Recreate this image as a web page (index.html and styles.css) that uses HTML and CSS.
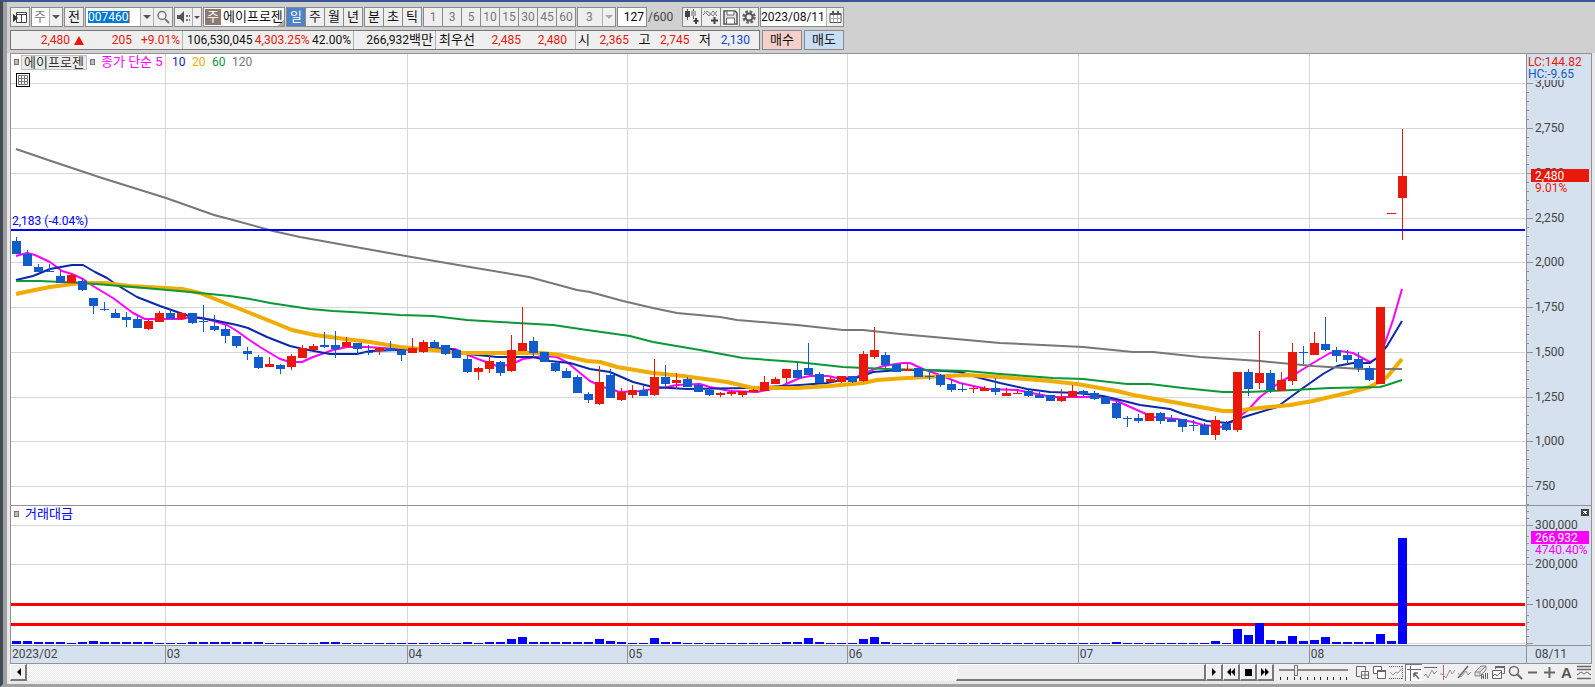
FILE: index.html
```html
<!DOCTYPE html>
<html lang="ko">
<head>
<meta charset="utf-8">
<title>에이프로젠 007460</title>
<link rel="stylesheet" href="styles.css">
</head>
<body>
<div class="window">
<header class="head">
  <div class="toolbar">
    <button class="btn" aria-label="패널"><svg width="15" height="13"><path d="M3.500 1.500h10v10h-10z M3 3.500h11 M8.500 3v9" fill="#fff" stroke="#444"/><path d="M0 3l5 4-5 4z" fill="#333"/></svg></button>
    <label class="combo"><select class="pick dim ko" aria-label="시장"><option>주</option></select><span class="arrow"></span></label>
    <button class="btn ko">전</button>
    <div class="combo code"><input class="field code-field" value="007460" aria-label="종목코드"><button class="arrow" aria-label="종목 목록"></button><button class="part" aria-label="검색"><svg width="14" height="14"><circle cx="6" cy="5.500" r="4" fill="#f4f4f4" stroke="#777" stroke-width="1.500"/><path d="M9 9l4 4" stroke="#777" stroke-width="2"/></svg></button></div>
    <div class="combo sound"><button class="part" aria-label="소리"><svg width="14" height="12"><path d="M0 4h3l4-4v12l-4-4h-3z" fill="#555"/><path d="M9 4h2v2h-2zM12 4h1v2h-1zM9 8h2v2h-2zM12 8h1v2h-1z" fill="#777"/></svg></button><button class="arrow small" aria-label="소리 설정"></button></div>
    <div class="stock ko"><span class="badge">주</span><span>에이프로젠</span></div>
    <div class="group ko"><button class="on">일</button><button>주</button><button>월</button><button>년</button></div>
    <div class="group ko"><button>분</button><button>초</button><button>틱</button></div>
    <div class="group dim"><button>1</button><button>3</button><button>5</button><button>10</button><button>15</button><button>30</button><button>45</button><button>60</button></div>
    <label class="combo"><select class="pick count dim" aria-label="간격"><option>3</option></select><span class="arrow faint"></span></label>
    <label class="bars"><input class="field bars-field" value="127" aria-label="봉 개수"><span>/600</span></label>
    <div class="group tools">
      <button aria-label="봉 종류"><svg width="16" height="16"><path d="M3.500 0v11M9.500 0v10" stroke="#555"/><path d="M1 2h5v6h-5z" fill="#444"/><path d="M7 2h5v5h-5z" fill="#aaa"/><path d="M12 9v6M9.500 12h5" stroke="#444" stroke-width="2"/></svg></button>
      <button aria-label="지표 추가"><svg width="16" height="16"><path d="M0 6l4-4 6 5 4-5M1 2l5 5 4-5 4 5" fill="none" stroke="#777"/><path d="M11.500 8v7M8 11.500h7" stroke="#444" stroke-width="2"/></svg></button>
      <button aria-label="저장"><svg width="15" height="15"><path d="M1 1h11l2 2v11h-13z" fill="#e4e4e4" stroke="#555" stroke-width="1.500"/><path d="M4 1h7v4h-7zM3.500 8h8v6h-8z" fill="#fff" stroke="#666"/></svg></button>
      <button aria-label="설정"><svg width="14" height="14"><circle cx="7" cy="7" r="5.500" fill="none" stroke="#666" stroke-width="2.500" stroke-dasharray="2.600 1.720"/><circle cx="7" cy="7" r="3.500" fill="none" stroke="#555" stroke-width="2"/></svg></button>
    </div>
    <div class="combo date"><input class="field date-field" value="2023/08/11" aria-label="날짜"><button class="part" aria-label="달력"><svg width="13" height="12"><path d="M1 2.500h11v9h-11z" fill="#fff" stroke="#555"/><path d="M1 3h11M4 0v3M9 0v3" stroke="#555" stroke-width="2"/><path d="M1 7.500h11M4.500 4v7M8.500 4v7" stroke="#aaa"/></svg></button></div>
  </div>
  <div class="quote-row">
    <div class="quote">
      <div class="cell now"><span class="red">2,480</span><svg class="up" width="10" height="9"><path d="M5 0l5 9h-10z" fill="#e8190a"/></svg><span class="red diff">205</span><span class="red rate">+9.01%</span></div>
      <div class="cell volume"><span>106,530,045</span><span class="red">4,303.25%</span><span>42.00%</span></div>
      <div class="cell value"><span>266,932</span><span class="ko">백만</span></div>
      <div class="cell best"><span class="ko">최우선</span><span class="red">2,485</span><span class="red">2,480</span></div>
      <div class="cell ohl"><span class="ko">시</span><span class="red">2,365</span><span class="ko">고</span><span class="red">2,745</span><span class="ko">저</span><span class="blue">2,130</span></div>
    </div>
    <button class="order buy ko">매수</button>
    <button class="order sell ko">매도</button>
  </div>
</header>
<main class="frame">
  <div class="chart">
    <section class="pane">
      <div class="plot">
        <svg id="price" class="draw" viewBox="11 54 1515 451" height="451" preserveAspectRatio="none"></svg>
        <div class="legend">
          <i class="mark"></i><span class="name ko">에이프로젠</span><i class="mark"></i>
          <span class="ma5 ko">종가 단순 5</span><span class="ma10">10</span><span class="ma20">20</span><span class="ma60">60</span><span class="ma120">120</span>
        </div>
        <button class="sheet" aria-label="표"><svg width="10" height="10"><path d="M.5.5h9v9h-9zM0 3.500h10M0 6.500h10M3.500 0v10M6.500 0v10" fill="none" stroke="#777"/></svg></button>
        <span class="base">2,183 (-4.04%)</span>
      </div>
      <svg id="priceAxis" class="axis" viewBox="1526 54 65 451" width="65" height="451"></svg>
    </section>
    <section class="pane">
      <div class="plot">
        <svg id="volume" class="draw" viewBox="11 506 1515 139" height="139" preserveAspectRatio="none"></svg>
        <div class="legend low"><i class="mark"></i><span class="turnover ko">거래대금</span></div>
      </div>
      <svg id="volumeAxis" class="axis" viewBox="1526 506 65 139" width="65" height="139"></svg>
    </section>
    <div class="months">
      <div class="spans"><span class="m2">2023/02</span><span class="m3">03</span><span class="m4">04</span><span class="m5">05</span><span class="m6">06</span><span class="m7">07</span><span class="m8">08</span></div>
      <span class="last">08/11</span>
    </div>
  </div>
  <div class="bottom">
    <button class="key" aria-label="왼쪽"><svg width="5" height="8"><path d="M5 0v8l-4-4z"/></svg></button>
    <div class="track"><div class="thumb"></div></div>
    <div class="keys">
      <button class="key" aria-label="오른쪽"><svg width="5" height="8"><path d="M0 0v8l4-4z"/></svg></button>
      <button class="key" aria-label="뒤로"><svg width="10" height="8"><path d="M5 0v8l-4-4zM9 0v8l-4-4z"/></svg></button>
      <button class="key" aria-label="정지"><svg width="7" height="7"><path d="M0 0h7v7h-7z"/></svg></button>
      <button class="key" aria-label="앞으로"><svg width="10" height="8"><path d="M1 0v8l4-4zM5 0v8l4-4z"/></svg></button>
    </div>
    <label class="slide"><input type="range" min="0" max="100" value="23" aria-label="확대"><svg width="68" height="3"><path d="M1.500 0v3M8.500 0v3M15.500 0v3M21.500 0v3M28.500 0v3M35.500 0v3M41.500 0v3M48.500 0v3M54.500 0v3M61.500 0v3M67.500 0v3" stroke="#222"/></svg></label>
    <div class="icons">
      <button aria-label="창 추가"><svg viewBox="0 0 15 15"><path d="M5.500 11.500h-4v-10h9v4"/><path d="M6.500 6.500h7v7h-7zM10 7v6M7 10h6" fill="#fff"/></svg></button>
      <button aria-label="창 복사"><svg viewBox="0 0 15 15"><path d="M1.500 1.500h8v7h-8z" fill="#fff"/><path d="M5.500 5.500h8v8h-8z" fill="#fff"/><path d="M5 6h9" stroke-width="2"/></svg></button>
      <button aria-label="영역"><svg viewBox="0 0 15 15"><path d="M0 1.500h14M0 13.500h14M13.500 1v13" stroke-dasharray="1 1"/><path d="M1 7l3 3 3-3 2 1 4-5" stroke="#999"/></svg></button>
      <button class="pressed" aria-label="십자선"><svg viewBox="0 0 15 15"><path d="M0 3.500h14M3.500 0v15"/><path d="M7 7l5 6M7 7h4M7 7v4" stroke-width="1.500"/></svg></button>
      <button aria-label="수평선"><svg viewBox="0 0 15 15"><path d="M1 2.500h13"/><path d="M1 11l2-2 2 4 4-8 2 4 3-3" stroke="#999"/></svg></button>
      <button aria-label="수직선"><svg viewBox="0 0 15 15"><path d="M3.500 0v15" stroke="#a56a7c"/><path d="M0 9h2l4 4 4-8 2 4 3-4" stroke="#999"/></svg></button>
      <button aria-label="추세선"><svg viewBox="0 0 15 15"><path d="M1 13l10-12" stroke-width="1.500"/><path d="M1 8l3 4 5-6 2 4 3-3" stroke="#999"/></svg></button>
      <button aria-label="전체 지우기"><svg viewBox="0 0 15 15"><path d="M1 7l6-6h5l-6 6zM1 7v4h5v-4M6 11l6-6v-4" fill="#ddd" stroke="#888"/><path d="M7.500 14v-4l1-1 1 1v4M7.500 12h2M11.500 8v6M13.500 8v6"/></svg></button>
      <button aria-label="차트 겹치기"><svg viewBox="0 0 15 15"><path d="M4.500 4v-2.500h9v7h-2"/><path d="M1.500 5.500h9v8h-9zM2 11l2-2 2 2 4-4" fill="#fff"/><path d="M4 2h10" stroke-width="2"/></svg></button>
      <button aria-label="돋보기"><svg viewBox="0 0 15 15"><circle cx="6" cy="6" r="4.500" stroke-width="1.500"/><path d="M9 9l5 5" stroke-width="2"/></svg></button>
      <button aria-label="축소"><svg viewBox="0 0 15 15"><path d="M3 7.500h9" stroke-width="2"/></svg></button>
      <button aria-label="확대"><svg viewBox="0 0 15 15"><path d="M2 7.500h11M7.500 2v11" stroke-width="2"/></svg></button>
      <button class="letter" aria-label="글자">A</button>
      <button aria-label="목록"><svg viewBox="0 0 15 15"><path d="M1 1.500h14M1 4.500h14M1 13.500h14" stroke-width="1.500"/><path d="M1 10l4-3 3 2 3-2 4 3"/></svg></button>
    </div>
  </div>
</main>
</div>
<script src="chart.js"></script>
</body>
</html>
```

FILE: chart.js
```js
// Each candle: direction, high, body top, body bottom, low
const candles = `b 237 241 254 254|b 250 254 266 266|b 264 267 272 272|b 264 271 272 272|b 271 276 283 283|r 273 275 283 283|b 278 281 290 291|b 298 298 306 314|b 302 309 310 311|b 309 313 318 318|b 312 317 320 327|b 316 319 328 328|r 320 321 329 330|r 311 313 322 322|b 310 313 319 319|r 312 313 319 320|b 313 313 323 324|b 305 321 322 332|b 315 326 330 331|b 325 329 336 343|b 336 336 346 348|b 347 351 354 360|b 355 357 368 369|r 357 364 367 367|b 364 365 369 374|r 354 356 367 370|r 345 348 358 358|r 344 346 350 350|b 332 345 347 348|b 331 345 349 358|r 337 342 347 347|b 343 343 349 354|b 345 352 353 355|r 347 348 351 355|b 341 348 351 351|b 350 350 355 361|r 338 348 353 353|r 340 342 352 353|b 340 342 347 348|b 345 345 354 355|b 350 350 358 358|b 355 359 372 373|r 367 368 372 380|r 356 361 369 373|b 361 362 373 376|r 335 350 371 372|r 307 343 351 351|b 337 341 353 357|b 352 352 362 362|b 362 363 371 372|b 368 371 378 378|b 375 377 393 393|b 392 394 400 403|r 366 382 404 405|b 369 375 398 398|r 388 392 400 401|r 385 390 395 398|b 386 390 396 396|r 359 377 395 396|b 365 377 384 389|r 373 380 383 389|b 377 379 387 387|b 384 385 392 392|b 388 390 395 396|r 392 393 395 397|r 390 392 394 396|r 391 391 395 397|r 389 390 392 393|r 376 382 391 391|r 377 379 384 384|r 369 369 378 383|b 363 370 378 378|b 343 368 375 375|b 372 374 383 383|r 377 379 382 382|r 376 376 382 383|b 376 376 382 383|r 351 354 381 382|r 327 350 357 359|b 352 355 365 368|b 364 364 372 372|r 364 369 371 371|b 368 368 377 377|b 372 376 377 380|b 374 375 385 387|b 380 384 390 392|b 383 389 390 392|r 386 388 389 393|r 386 388 391 391|b 378 388 392 395|r 388 393 396 396|r 389 393 394 394|b 390 391 396 397|b 392 395 398 398|b 395 395 401 401|r 389 397 401 402|r 385 391 397 397|b 390 391 394 396|b 391 393 399 400|b 397 397 404 404|b 400 403 418 419|b 416 418 419 427|b 414 418 421 423|r 413 413 421 421|b 412 413 421 424|b 415 419 422 422|b 419 419 427 432|b 420 425 426 431|b 423 425 435 435|r 416 420 435 440|b 421 424 430 431|r 372 372 430 432|b 369 372 389 396|r 331 373 383 389|b 370 373 390 393|r 372 380 391 391|r 343 352 381 385|b 346 352 353 364|r 332 343 355 355|b 317 344 350 351|b 347 350 356 362|b 350 355 360 364|b 352 359 368 372|b 366 368 380 381|r 307 307 384 384|r 213 213 214 214|r 129 176 198 240`
  .split('|').map(row => row.split(' '));

const averages = [
  ['#ff00ff', 2, '16,256 27,253 35,255 50,262 62,271 72,274 83,279 93,286 113,298 133,313 145,319 182,319 192,317 203,318 227,325 237,331 248,339 260,347 280,359 290,362 302,362 313,357 333,350 347,347 367,347 397,349 428,348 455,349 468,355 478,359 497,366 510,365 523,359 543,356 557,357 568,363 580,373 590,381 603,387 620,392 640,391 667,387 677,385 700,384 710,387 730,391 757,392 777,388 800,378 810,376 828,376 837,378 857,377 867,372 883,366 903,363 910,363 923,369 937,374 960,383 987,389 1017,390 1037,394 1053,397 1073,397 1100,397 1117,401 1137,410 1153,417 1177,419 1193,422 1203,425 1223,427 1235,420 1248,410 1260,397 1280,382 1297,373 1313,363 1330,353 1340,351 1353,353 1370,362 1380,356 1385,343 1393,320 1402,289'],
  ['#0a28aa', 2, '16,280 33,276 50,269 72,265 83,265 95,272 107,278 117,285 137,297 160,306 180,313 192,317 213,320 237,325 248,328 267,337 290,346 303,349 330,354 357,354 370,351 400,350 430,348 450,349 468,354 497,357 533,357 550,361 570,363 590,369 610,372 633,382 653,387 687,389 747,388 800,385 827,383 847,379 860,377 873,372 900,370 927,370 960,372 980,378 1000,383 1027,389 1050,392 1077,393 1103,396 1120,400 1140,405 1170,409 1183,414 1207,421 1227,423 1247,416 1277,407 1303,388 1323,374 1337,366 1353,363 1370,363 1377,358 1387,346 1402,321'],
  ['#f0ac00', 4, '16,294 30,291 50,287 80,283 105,283 130,286 182,289 200,293 220,301 250,313 270,321 292,330 315,335 345,339 370,342 400,347 433,350 460,353 543,353 560,355 587,361 600,362 617,367 653,373 683,376 727,382 753,388 797,388 830,386 863,383 877,380 907,378 927,377 967,375 1000,377 1050,381 1077,384 1117,391 1133,395 1167,401 1200,407 1223,411 1237,411 1250,409 1290,405 1313,401 1347,393 1370,387 1387,377 1402,359'],
  ['#0a9838', 2, '16,281 40,281 83,283 133,287 190,292 230,296 250,299 270,303 310,309 333,311 370,313 400,315 433,316 467,320 500,322 553,325 587,330 630,336 653,342 700,350 743,358 797,362 843,367 887,369 967,371 1000,374 1053,378 1083,379 1127,384 1150,384 1183,388 1223,392 1247,392 1293,390 1330,388 1380,387 1387,385 1402,380'],
  ['#777777', 2, '16,149 51,161 102,178 166,198 214,215 233,220 273,231 300,237 400,255 458,265 529,277 577,290 590,292 623,301 653,308 677,313 720,317 737,320 797,325 843,330 863,330 900,334 967,340 1000,343 1083,347 1133,352 1153,352 1200,357 1260,361 1313,366 1360,369 1402,369']
];

// Turnover bar heights for the taller sessions; every other session is 1 tall
const heights = {0:3,1:3,2:2,3:2,4:2,6:2,7:3,8:2,9:2,10:2,11:2,12:2,16:2,17:2,18:2,19:2,20:2,21:2,22:2,28:2,29:2,41:2,43:2,44:2,45:5,46:7,47:2,48:2,49:2,50:2,51:2,52:2,53:5,54:3,55:2,58:6,59:2,60:2,70:2,71:2,72:6,73:2,77:5,78:7,79:2,100:2,109:3,111:15,112:9,113:21,114:4,115:3,116:8,117:3,118:4,119:7,120:2,121:2,122:2,123:2,124:10,125:3,126:106};

const months = [165, 407, 627, 847, 1078, 1309];
const rect = (x, y, w, h, fill) => `<rect x="${x}" y="${y}" width="${w}" height="${h}" fill="${fill}"/>`;
const text = (x, y, s, fill = '#444') => `<text x="${x}" y="${y}" fill="${fill}">${s}</text>`;
const grid = '#d6d6d6';
const levels = [[83, '3,000'], [128, '2,750'], [173, '2,500'], [218, '2,250'], [262, '2,000'], [307, '1,750'], [352, '1,500'], [397, '1,250'], [441, '1,000'], [486, '750']];

let price = months.map(x => rect(x, 54, 1, 451, grid)).join('') + levels.map(([y]) => rect(11, y, 1514, 1, grid)).join('');
const line = ([color, width, points]) => `<polyline points="${points}" fill="none" stroke="${color}" stroke-width="${width}" stroke-linejoin="round"/>`;
price += [0, 1, 2, 3, 4].map(i => line(averages[i])).join('');
candles.forEach(([dir, high, top, bottom, low], i) => {
  const x = 12 + 11 * i, color = dir === 'r' ? '#e8190a' : '#125bcb';
  price += rect(x + 4, high, 1, low - high, color) + rect(x, top, 9, bottom - top, color);
});
price += rect(11, 229, 1514, 2, '#0000ff');
document.getElementById('price').innerHTML = price;

let axis = rect(1526, 54, 1, 451, '#929292');
levels.forEach(([y, label], i) => {
  axis += rect(1527, y, 6, 1, '#929292') + text(1535, y + 4, label);
  for (let k = 1; k < 5 && y + 9 * k < 505; k++) axis += rect(1527, y + 9 * k, 2, 1, '#929292');
});
axis += rect(1527, 54, 64, 26, '#d6e1ef') + text(1528, 66, 'LC:144.82', '#e8190a') + text(1528, 78, 'HC:-9.65', '#125bcb');
axis += rect(1531, 169, 58, 13, '#e8190a') + text(1535, 180, '2,480', '#fff') + text(1535, 192, '9.01%', '#e8190a');
document.getElementById('priceAxis').innerHTML = axis;

let volume = months.map(x => rect(x, 506, 1, 139, grid)).join('') + [525, 564, 643].map(y => rect(11, y, 1514, 1, grid)).join('');
volume += rect(11, 603, 1514, 3, '#ff0000') + rect(11, 623, 1514, 3, '#ff0000');
candles.forEach((_, i) => {
  const h = heights[i] || 1;
  volume += rect(12 + 11 * i, 644 - h, 9, h, '#0000ff');
});
document.getElementById('volume').innerHTML = volume;

let side = rect(1526, 506, 1, 139, '#929292');
[511, 518, 536, 543, 550, 557, 576, 583, 590, 597, 615, 622, 629, 636].forEach(y => side += rect(1527, y, 2, 1, '#929292'));
[525, 564, 604, 643].forEach(y => side += rect(1527, y, 6, 1, '#929292'));
side += text(1535, 529, '300,000') + text(1535, 568, '200,000') + text(1535, 608, '100,000');
side += rect(1531, 531, 58, 13, '#ff00ff') + text(1535, 542, '266,932', '#fff') + text(1535, 554, '4740.40%', '#ff00ff');
side += rect(1581, 509, 8, 7, '#444') + '<path d="M1583 511l4 3M1587 511l-4 3" stroke="#fff"/>';
document.getElementById('volumeAxis').innerHTML = side;
```

FILE: styles.css
```css
* { box-sizing: border-box; }
body { margin: 0; background: #a0a0a0; color: #111; font: 12px/16px Roboto, "Noto Sans CJK KR", sans-serif; }
button, input, select { font: inherit; color: inherit; margin: 0; padding: 0; border: 0; border-radius: 0; background: none; }
svg { display: block; flex: none; }
.ko { font-size: 13px; }
.window { min-height: 100vh; border-top: 2px solid #3a5593; border-left: 3px solid #454b54; border-bottom: 3px solid #a0a0a0; padding-left: 4px; display: flex; flex-direction: column; white-space: nowrap; }
.head { background: #d0d0d0; padding: 5px 3px 3px; display: flex; flex-direction: column; gap: 3px; }
.toolbar { display: flex; gap: 1px; height: 20px; }
.btn, .combo, .group, .stock { display: flex; align-items: center; height: 20px; border: 1px solid #8a8a8a; background: #efefef; flex: none; }
.btn { width: 20px; display: flex; align-items: center; justify-content: center; }
.dim { color: #777; }
.pick { appearance: none; width: 17px; padding-left: 2px; height: 18px; background: #fff; }
.count { width: 24px; padding-left: 8px; background: #efefef; }
.arrow { width: 13px; height: 18px; display: flex; align-items: center; justify-content: center; background: #f0f0f0; border-left: 1px solid #b0b0b0; flex: none; }
.arrow::before { content: ""; border: 4px solid transparent; border-top-color: #555; border-bottom: 0; }
.arrow.small { width: 9px; }
.arrow.small::before { border-width: 3px; border-bottom: 0; }
.arrow.faint::before { border-top-color: #aaa; }
.part { display: flex; align-items: center; justify-content: center; width: 19px; height: 18px; border-left: 1px solid #b0b0b0; flex: none; }
.sound .part { width: 17px; border-left: 0; }
.field { background: #fff; height: 18px; }
.code-field { width: 54px; padding-left: 2px; color: #fff; background: linear-gradient(90deg, #0078d7 41px, #ff8c30 41px, #ff8c30 42px, #fff 42px) 2px 3px / 52px 12px no-repeat #fff; }
.stock { width: 82px; padding-left: 1px; gap: 2px; background: linear-gradient(135deg, #fff 50%, #aaa 50%) 100% 100% / 6px 6px no-repeat #fff; }
.badge { width: 16px; height: 16px; line-height: 16px; background: #8d7b73; color: #fff; text-align: center; flex: none; }
.group button { width: 19px; height: 18px; border-left: 1px solid #8a8a8a; display: flex; align-items: center; justify-content: center; }
.group button:first-child { width: 18px; border-left: 0; }
.group .on { background: #4c82c8; color: #fff; }
.bars { display: flex; align-items: center; gap: 1px; width: 54px; color: #444; flex: none; }
.bars-field { width: 30px; height: 20px; border: 1px solid #8a8a8a; color: #000; text-align: right; padding-right: 2px; }
.tools { margin-left: 10px; }
.date-field { width: 65px; }
.date .part { width: 17px; }
.quote-row { display: flex; gap: 2px; height: 20px; }
.quote { display: flex; width: 750px; border: 1px solid #777; background: #efefef; }
.cell { display: flex; align-items: center; border-right: 1px solid #b4b4b4; }
.cell:last-child { border-right: 0; }
.now { width: 172px; justify-content: flex-end; padding-right: 2px; }
.up { margin-left: 4px; }
.diff { width: 48px; text-align: right; }
.rate { width: 48px; text-align: right; }
.volume { width: 171px; justify-content: space-between; padding: 0 2px 0 4px; }
.value { width: 82px; justify-content: flex-end; padding-right: 2px; }
.best { width: 140px; justify-content: space-between; padding: 0 8px 0 3px; }
.ohl { flex: 1; justify-content: space-between; padding: 0 9px 0 2px; }
.red { color: #e8190a; }
.blue { color: #1048c8; }
.order { width: 40px; border: 1px solid #8a8a8a; }
.buy { background: #f5d0cb; }
.sell { background: #c8def4; }
.frame { background: #e8e8e8; padding: 0 3px 3px; }
.chart { border: 1px solid #929292; background: #fff; }
.pane { display: flex; border-bottom: 1px solid #929292; }
.plot { flex: 1; min-width: 0; position: relative; }
.draw { width: 100%; }
.draw rect { shape-rendering: crispEdges; }
.axis { background: #d6e1ef; shape-rendering: crispEdges; }
.legend { position: absolute; left: 3px; top: 0; display: flex; align-items: center; height: 16px; }
.mark { width: 5px; height: 6px; border: 1px solid #777; background: #bbb; }
.name { border: 1px solid #c0c0c0; background: #ebebeb; color: #333; width: 66px; line-height: 13px; text-align: center; margin: 0 3px 0 2px; }
.ma5 { color: #ff00ff; margin-left: 6px; width: 71px; }
.ma10 { color: #0a28aa; width: 20px; }
.ma20 { color: #f0ac00; width: 20px; }
.ma60 { color: #0a9838; width: 20px; }
.ma120 { color: #777; }
.turnover { color: #0000ff; margin-left: 6px; }
.sheet { position: absolute; left: 5px; top: 19px; width: 14px; height: 14px; border: 1px solid #000; background: #fff; display: flex; align-items: center; justify-content: center; }
.base { position: absolute; left: 1px; top: 159px; color: #0000ff; }
.months { display: flex; background: #d6e1ef; color: #444; height: 17px; line-height: 16px; }
.spans { flex: 1; display: flex; min-width: 0; }
.spans span { flex: 1 1 0; min-width: 0; border-left: 1px solid #929292; padding-left: 1px; }
.spans .m2 { flex-grow: 154; border-left: 0; }
.spans .m3 { flex-grow: 242; }
.spans .m4 { flex-grow: 220; }
.spans .m5 { flex-grow: 220; }
.spans .m6 { flex-grow: 231; }
.spans .m7 { flex-grow: 231; }
.spans .m8 { flex-grow: 217; }
.last { width: 65px; border-left: 1px solid #929292; padding-left: 8px; }
.bottom { display: flex; align-items: center; height: 17px; background: #f0f0f0; }
.key { width: 17px; height: 17px; display: flex; align-items: center; justify-content: center; background: #f0f0f0; border: 1px solid #fff; border-right: 2px solid #777; border-bottom: 2px solid #777; flex: none; }
.track { flex: 1; height: 17px; display: flex; justify-content: flex-end; background: repeating-conic-gradient(#fff 0 25%, #ececec 0 50%) 0 0 / 2px 2px; }
.thumb { width: 250px; background: #efefef; border: 1px solid #fff; border-right: 2px solid #777; border-bottom: 2px solid #777; }
.keys { display: flex; }
.slide { width: 69px; margin: 0 6px 0 5px; display: flex; flex-direction: column; gap: 1px; }
.slide input { appearance: none; width: 69px; height: 11px; background: linear-gradient(#888, #888) 0 4px / 100% 2px no-repeat; }
.slide input::-webkit-slider-thumb { appearance: none; width: 4px; height: 11px; background: #e8e8e8; border: 1px solid #777; }
.icons { display: flex; }
.icons button { width: 17px; height: 17px; display: flex; align-items: center; justify-content: center; }
.icons svg { width: 15px; height: 15px; fill: none; stroke: #666; }
.icons .pressed { background: #fff; border-left: 1px solid #777; border-top: 1px solid #777; }
.icons .letter { font: bold 15px/17px "Liberation Sans", sans-serif; color: #555; }
```
